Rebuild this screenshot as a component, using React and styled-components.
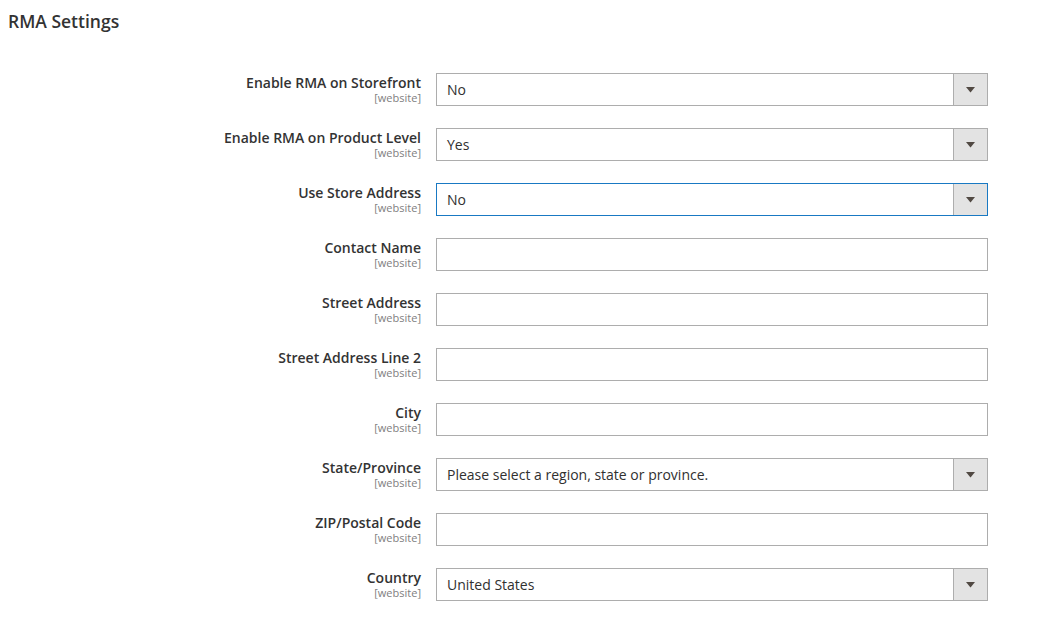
import React from "react";
import styled, { createGlobalStyle } from "styled-components";

const Global = createGlobalStyle`
  html, body { margin: 0; padding: 0; background: #fff; }
  body { font-family: "Open Sans", "Liberation Sans", sans-serif; color: #303030; }
  * { box-sizing: border-box; }
`;

const Page = styled.div`
  width: 1039px;
  height: 622px;
  padding: 9px 0 0 8px;
  background: #fff;
`;

const Title = styled.h2`
  margin: 0;
  font-size: 17.5px;
  font-weight: 600;
  line-height: 24px;
  color: #333;
`;

const Form = styled.div`
  display: flex;
  flex-direction: column;
  gap: 22px;
  margin-top: 40px;
`;

const Row = styled.div`
  display: grid;
  grid-template-columns: 413px 552px;
  column-gap: 15px;
  align-items: start;
`;

const LabelCol = styled.div`
  display: flex;
  flex-direction: column;
  align-items: flex-end;
  text-align: right;
  padding-top: 1px;
`;

const LabelText = styled.span`
  font-size: 14px;
  font-weight: 600;
  line-height: 18px;
  color: #333;
`;

const Scope = styled.span`
  font-size: 11px;
  line-height: 13px;
  margin-top: -1px;
  color: #808080;
`;

const Field = styled.div`
  position: relative;
  height: 33px;
  border: 1px solid ${(p) => (p.$focused ? "#1979c3" : "#adadad")};
  background: #fff;
  display: flex;
  align-items: center;
  padding-left: 10px;
  font-size: 14px;
  color: #303030;
`;

const Value = styled.span`
  flex: 1;
  line-height: 18px;
`;

const Arrow = styled.div`
  width: 34px;
  align-self: stretch;
  background: #e3e3e3;
  border-left: 1px solid #adadad;
  display: flex;
  align-items: center;
  justify-content: center;
`;

const rows = [
  { label: "Enable RMA on Storefront", select: true, value: "No" },
  { label: "Enable RMA on Product Level", select: true, value: "Yes" },
  { label: "Use Store Address", select: true, value: "No", focused: true },
  { label: "Contact Name" },
  { label: "Street Address" },
  { label: "Street Address Line 2" },
  { label: "City" },
  { label: "State/Province", select: true, value: "Please select a region, state or province." },
  { label: "ZIP/Postal Code" },
  { label: "Country", select: true, value: "United States" },
];

export default function App() {
  return (
    <Page>
      <Global />
      <Title>RMA Settings</Title>
      <Form>
        {rows.map((r) => (
          <Row key={r.label}>
            <LabelCol>
              <LabelText>{r.label}</LabelText>
              <Scope>[website]</Scope>
            </LabelCol>
            <Field $focused={r.focused}>
              <Value>{r.value || ""}</Value>
              {r.select && (
                <Arrow>
                  <svg width="9" height="6" viewBox="0 0 9 6">
                    <path d="M0 0 H9 L4.5 5.5 Z" fill="#514943" />
                  </svg>
                </Arrow>
              )}
            </Field>
          </Row>
        ))}
      </Form>
    </Page>
  );
}
